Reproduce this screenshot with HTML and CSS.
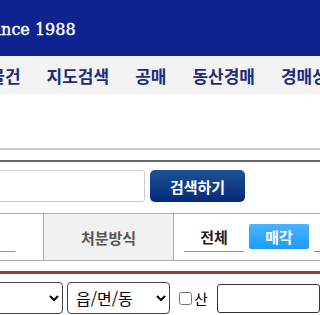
FILE: index.html
```html
<!DOCTYPE html>
<html lang="ko">
<head>
  <meta charset="UTF-8">
  <meta name="viewport" content="width=device-width, initial-scale=1.0">
  <title>경매 검색</title>
  <link rel="stylesheet" href="styles.css">
</head>
<body>
  <div class="page">

    <!-- Top Banner -->
    <header class="top">
      <div class="slogan">Since 1988</div>
    </header>

    <!-- Main Menu -->
    <nav class="gnb">
      <ul>
        <li><a href="#">관심물건</a></li>
        <li><a href="#">지도검색</a></li>
        <li><a href="#">공매</a></li>
        <li><a href="#">동산경매</a></li>
        <li><a href="#">경매상식</a></li>
      </ul>
    </nav>

    <div class="sub-head"></div>

    <!-- Search -->
    <div class="search-area">
      <input type="text" class="search-input">
      <button type="button" class="btn-search">검색하기</button>
    </div>

    <!-- Filter Row -->
    <div class="filter">
      <div class="cell cell-opts cell-first">
        <span class="opt">전체</span>
      </div>
      <div class="cell cell-label">처분방식</div>
      <div class="cell cell-opts">
        <span class="opt">전체</span>
        <span class="opt active">매각</span>
        <span class="opt">임대</span>
      </div>
    </div>

    <div class="divider"></div>

    <!-- Address -->
    <div class="addr">
      <select class="sel sel-gu">
        <option>시/군/구</option>
      </select>
      <select class="sel sel-dong">
        <option>읍/면/동</option>
      </select>
      <label class="chk"><input type="checkbox"> 산</label>
      <input type="text" class="addr-input">
    </div>

  </div>
</body>
</html>
```

FILE: styles.css
```css
/* Reset */
* {
  margin: 0;
  padding: 0;
  box-sizing: border-box;
}
body {
  font-family: "Noto Sans CJK KR", "Noto Sans", sans-serif;
  background-color: #fff;
  color: #222;
  overflow: hidden;
}

/* Page is wider than the window */
.page {
  width: 1100px;
  margin-left: -220px;
}

/* Top Banner */
.top {
  height: 56px;
  background-color: #0e2290;
  padding: 20px 0 0 205px;
}
.slogan {
  font-family: "DejaVu Serif", serif;
  font-size: 16px;
  line-height: 20px;
  color: #fff;
  -webkit-text-stroke: 0.4px #fff;
}

/* Main Menu */
.gnb {
  height: 38px;
  background-color: #f3f3f3;
}
.gnb ul {
  list-style: none;
  display: flex;
  gap: 26px;
  height: 100%;
  padding-left: 178px;
  align-items: center;
}
.gnb ul li a {
  color: #1c2c7c;
  font-size: 17px;
  font-weight: bold;
  text-decoration: none;
  white-space: nowrap;
}

.sub-head {
  height: 56px;
  border-bottom: 2px solid #ccc;
}

/* Search */
.search-area {
  margin-top: 10px;
  border-top: 2px solid #666;
  padding: 8px 0 11px 120px;
  display: flex;
  gap: 5px;
}
.search-input {
  width: 245px;
  height: 32px;
  border: 1px solid #ccc;
  border-radius: 3px;
}
.btn-search {
  width: 95px;
  height: 32px;
  border: none;
  border-radius: 5px;
  background: linear-gradient(#1c5293, #06287a);
  color: #fff;
  font-family: inherit;
  font-size: 15px;
  font-weight: bold;
}

/* Filter Row */
.filter {
  margin-left: 100px;
  height: 48px;
  display: flex;
  border-top: 1px solid #adadad;
  border-bottom: 1px solid #adadad;
}
.cell {
  border-right: 1px solid #adadad;
}
.cell-first {
  width: 164px;
  justify-content: flex-end;
  padding-right: 28px;
}
.cell-label {
  width: 130px;
  background-color: #f1f1f1;
  display: flex;
  align-items: center;
  justify-content: center;
  font-size: 15px;
  font-weight: bold;
  color: #555;
}
.cell-opts {
  display: flex;
  gap: 5px;
  padding-top: 10px;
  padding-left: 10px;
  align-items: flex-start;
}
.cell-opts.cell-first {
  padding-left: 0;
}
.opt {
  width: 60px;
  height: 28px;
  border-bottom: 1px solid #4a9ff0;
  text-align: center;
  font-size: 15px;
  font-weight: bold;
  line-height: 26px;
  color: #222;
}
.opt.active {
  height: 25px;
  border-bottom: none;
  border-radius: 2px;
  background: linear-gradient(#4cb2ff, #1a9cff);
  color: #fff;
  line-height: 25px;
}

.divider {
  margin-top: 10px;
  border-top: 3px solid #8e3c3c;
}

/* Address */
.addr {
  margin-top: 8px;
  padding-left: 143px;
  display: flex;
  align-items: center;
}
.sel {
  height: 32px;
  border: 1px solid #444;
  border-radius: 4px;
  background-color: #fff;
  font-family: inherit;
  font-size: 16px;
  color: #000;
  padding-left: 4px;
}
.sel-gu {
  width: 140px;
  margin-right: 4px;
}
.sel-dong {
  width: 103px;
}
.chk {
  margin-left: 9px;
  display: flex;
  align-items: center;
  gap: 2px;
  font-size: 15px;
  color: #000;
}
.chk input {
  width: 13px;
  height: 13px;
  margin: 0;
}
.addr-input {
  margin-left: 9px;
  width: 103px;
  height: 29px;
  border: 1px solid #333;
  border-radius: 3px;
}
```
